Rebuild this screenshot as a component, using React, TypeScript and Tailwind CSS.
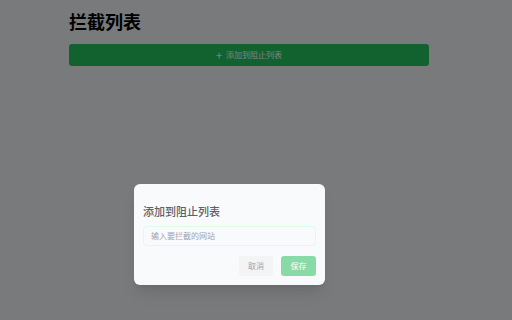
export default function App() {
  return (
    <div
      className="relative w-[512px] h-[320px] overflow-hidden bg-[#f3f4f6]"
      style={{ fontFamily: '"Noto Sans CJK SC", "Noto Sans", sans-serif' }}
    >
      <div className="pl-[69px] pt-[9px] w-[429px]">
        <h1 className="text-[18px] leading-[24px] font-bold text-black">拦截列表</h1>
        <button className="mt-[11px] w-full h-[22px] rounded-[3px] bg-[#22c55e] text-white text-[8px] flex items-center justify-center gap-[4px]">
          <span className="text-[11px] leading-none">+</span>
          <span>添加到阻止列表</span>
        </button>
      </div>

      <div className="absolute inset-0 bg-black/50">
        <div className="ml-[134px] mt-[184px] w-[191px] h-[101px] rounded-[6px] bg-[#f9fafb] px-[9px] pt-[19px] shadow-lg">
          <h2 className="text-[11px] leading-[16px] font-medium text-[#5b616b]">添加到阻止列表</h2>
          <div className="mt-[7px] h-[20px] rounded-[4px] border border-[#dcfce7] bg-[#f9fafb] flex items-center px-[7px]">
            <span className="text-[8px] text-[#9ca3af]">输入要拦截的网站</span>
          </div>
          <div className="mt-[10px] flex justify-end gap-[8px]">
            <button className="w-[34px] h-[20px] rounded-[2px] bg-[#f3f4f6] text-[8px] text-[#9ca3af]">取消</button>
            <button className="w-[35px] h-[20px] rounded-[3px] bg-[#88dba6] text-[8px] text-white">保存</button>
          </div>
        </div>
      </div>
    </div>
  );
}
